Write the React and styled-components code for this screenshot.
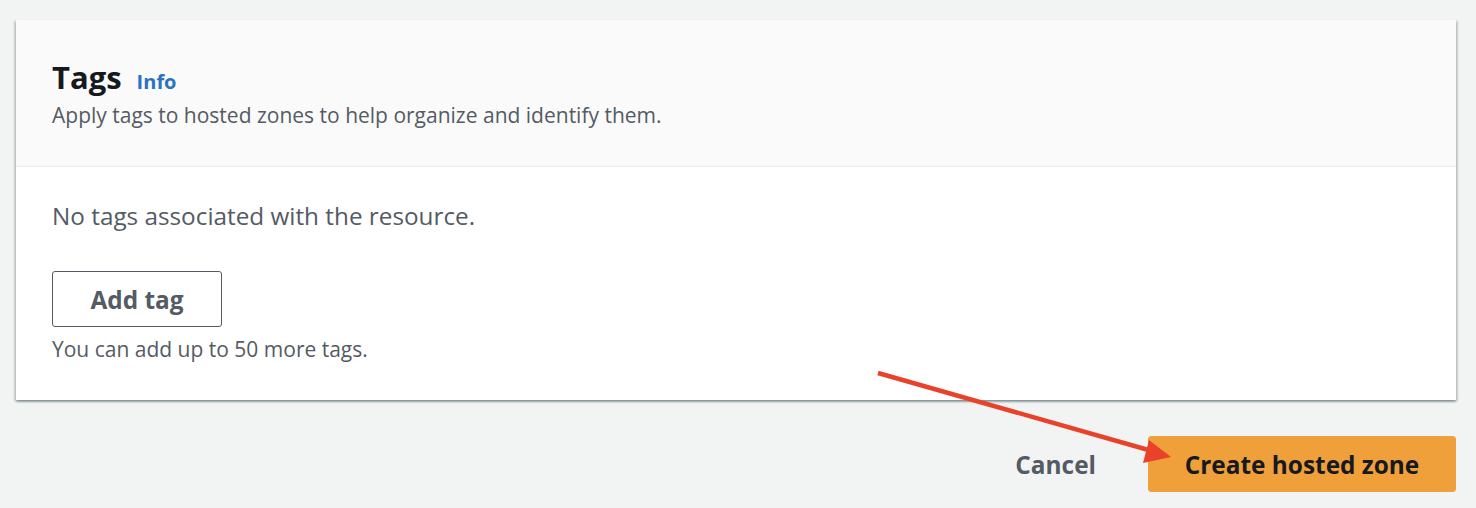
import React from 'react'
import styled, { createGlobalStyle } from 'styled-components'

const GlobalStyle = createGlobalStyle`
  html, body {
    margin: 0;
    padding: 0;
    background: #f2f3f3;
    font-family: "Open Sans", "Liberation Sans", Arial, sans-serif;
  }
`

const Page = styled.div`
  position: relative;
  width: 1476px;
  height: 508px;
  padding: 20px 20px 0 16px;
  box-sizing: border-box;
  overflow: hidden;
`

const Card = styled.section`
  width: 1440px;
  background: #ffffff;
  box-shadow: 0 2px 2px 0 rgba(0, 28, 36, 0.3),
    2px 1px 2px 0 rgba(0, 28, 36, 0.15),
    -2px 1px 2px 0 rgba(0, 28, 36, 0.15);
`

const CardHeader = styled.header`
  background: #fafafa;
  border-bottom: 1px solid #eaeded;
  padding: 37px 36px 37px;
`

const TitleRow = styled.div`
  display: flex;
  align-items: baseline;
  gap: 15px;
  height: 40px;
  line-height: 40px;
`

const Title = styled.h2`
  margin: 0;
  font-size: 31px;
  font-weight: 700;
  color: #16191f;
`

const InfoLink = styled.a`
  font-size: 20px;
  font-weight: 700;
  color: #2a73c0;
  text-decoration: none;
`

const Description = styled.p`
  margin: 4px 0 0;
  font-size: 21px;
  line-height: 28px;
  color: #545b64;
`

const CardBody = styled.div`
  padding: 33px 36px 37px;
`

const EmptyText = styled.p`
  margin: 0;
  font-size: 24.3px;
  line-height: 32px;
  color: #545b64;
`

const Button = styled.button`
  display: block;
  height: 56px;
  box-sizing: border-box;
  border-radius: 3px;
  font-family: inherit;
  font-size: 24.4px;
  font-weight: 700;
  cursor: pointer;
  border: 1px solid ${p => (p.$primary ? '#f0a03a' : '#545b64')};
  background: ${p => (p.$primary ? '#f0a03a' : '#ffffff')};
  color: ${p => (p.$primary ? '#16191f' : '#545b64')};
  padding: 0;
`

const AddButton = styled(Button)`
  margin-top: 39px;
  width: 170px;
`

const Hint = styled.p`
  margin: 8px 0 0;
  font-size: 21px;
  line-height: 28px;
  color: #545b64;
`

const Footer = styled.div`
  display: flex;
  justify-content: flex-end;
  align-items: center;
  gap: 26px;
  width: 1440px;
  margin-top: 36px;
`

const LinkButton = styled.button`
  background: none;
  border: none;
  font-family: inherit;
  font-size: 24.4px;
  font-weight: 700;
  color: #545b64;
  padding: 0 26px;
  height: 56px;
  cursor: pointer;
`

const CreateButton = styled(Button)`
  width: 308px;
`

const Annotation = styled.svg`
  position: absolute;
  left: 0;
  top: 0;
  pointer-events: none;
`

export default function App() {
  return (
    <>
      <GlobalStyle />
      <Page>
        <Card>
          <CardHeader>
            <TitleRow>
              <Title>Tags</Title>
              <InfoLink href="#">Info</InfoLink>
            </TitleRow>
            <Description>
              Apply tags to hosted zones to help organize and identify them.
            </Description>
          </CardHeader>
          <CardBody>
            <EmptyText>No tags associated with the resource.</EmptyText>
            <AddButton>Add tag</AddButton>
            <Hint>You can add up to 50 more tags.</Hint>
          </CardBody>
        </Card>
        <Footer>
          <LinkButton>Cancel</LinkButton>
          <CreateButton $primary>Create hosted zone</CreateButton>
        </Footer>
        <Annotation width="1476" height="508" viewBox="0 0 1476 508">
          <line x1="878" y1="373" x2="1152" y2="451" stroke="#e8432a" strokeWidth="4.5" strokeLinecap="butt" />
          <polygon points="1149,440 1143,463 1171,457" fill="#e8432a" />
        </Annotation>
      </Page>
    </>
  )
}
